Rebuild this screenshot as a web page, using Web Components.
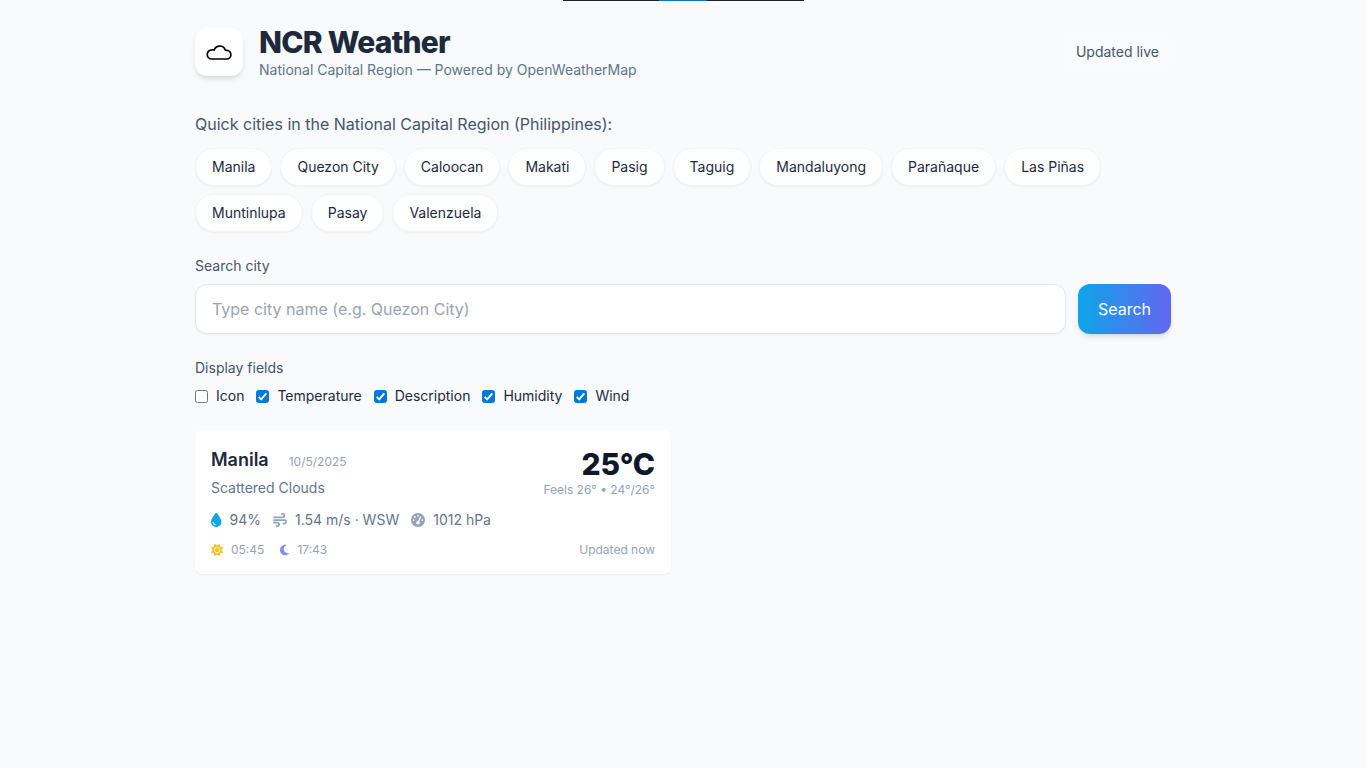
<!DOCTYPE html>
<html lang="en">
<head>
<meta charset="utf-8">
<title>NCR Weather</title>
<style>
body{margin:0;min-height:100vh;background:#f8fafc;color:#1e293b;font:16px/24px Inter,sans-serif}
</style>
</head>
<body>
<weather-app></weather-app>
<script>
const define = (name, html, setup) => {
  const tpl = document.createElement('template');
  tpl.innerHTML = '<style>*{box-sizing:border-box}:host{box-sizing:border-box}</style>' + html;
  customElements.define(name, class extends HTMLElement {
    constructor() {
      super();
      this.attachShadow({mode: 'open'}).append(tpl.content.cloneNode(true));
    }
    connectedCallback() { if (setup) setup(this, this.shadowRoot); }
  });
};

const icons = {
  droplet: ['0 0 384 512', 'M192 512C86 512 0 426 0 320C0 228.800 130.200 57.700 166.600 11.700C172.600 4.200 181.500 0 191.100 0h1.800c9.600 0 18.500 4.200 24.500 11.700C253.800 57.700 384 228.800 384 320c0 106-86 192-192 192zM96 336c0-8.800-7.200-16-16-16s-16 7.200-16 16c0 61.900 50.100 112 112 112c8.800 0 16-7.200 16-16s-7.200-16-16-16c-44.200 0-80-35.800-80-80z'],
  wind: ['0 0 512 512', 'M288 32c0 17.700 14.300 32 32 32h32c17.700 0 32 14.300 32 32s-14.300 32-32 32H32c-17.700 0-32 14.300-32 32s14.300 32 32 32H352c53 0 96-43 96-96s-43-96-96-96H320c-17.700 0-32 14.300-32 32zm64 352c0 17.700 14.300 32 32 32h32c53 0 96-43 96-96s-43-96-96-96H32c-17.700 0-32 14.300-32 32s14.300 32 32 32H416c17.700 0 32 14.300 32 32s-14.300 32-32 32H384c-17.700 0-32 14.300-32 32zM128 512h32c53 0 96-43 96-96s-43-96-96-96H32c-17.700 0-32 14.300-32 32s14.300 32 32 32H160c17.700 0 32 14.300 32 32s-14.300 32-32 32H128c-17.700 0-32 14.300-32 32s14.300 32 32 32z'],
  gauge: ['0 0 512 512', 'M0 256a256 256 0 1 1 512 0A256 256 0 1 1 0 256zM288 96a32 32 0 1 0-64 0 32 32 0 1 0 64 0zM256 416c35.300 0 64-28.700 64-64c0-17.400-6.900-33.100-18.100-44.600L366 161.700c5.300-12.100-.2-26.300-12.300-31.600s-26.300 .2-31.600 12.300L257.900 288c-.6 0-1.300 0-1.900 0c-35.300 0-64 28.700-64 64s28.700 64 64 64zM176 144a32 32 0 1 0-64 0 32 32 0 1 0 64 0zM96 288a32 32 0 1 0 0-64 32 32 0 1 0 0 64zm352-32a32 32 0 1 0-64 0 32 32 0 1 0 64 0z'],
  sun: ['0 0 512 512', 'M361.500 1.200c5 2.100 8.600 6.600 9.600 11.900L391 121l107.900 19.800c5.300 1 9.800 4.600 11.900 9.600s1.500 10.700-1.600 15.200L446.900 256l62.300 90.300c3.100 4.500 3.700 10.200 1.600 15.200s-6.600 8.600-11.900 9.600L391 391 371.100 498.900c-1 5.300-4.600 9.800-9.600 11.900s-10.700 1.500-15.200-1.600L256 446.900l-90.300 62.300c-4.500 3.100-10.200 3.700-15.200 1.600s-8.600-6.600-9.600-11.900L121 391 13.100 371.100c-5.300-1-9.800-4.600-11.900-9.600s-1.500-10.700 1.600-15.200L65.100 256 2.800 165.700c-3.100-4.500-3.700-10.200-1.600-15.200s6.600-8.600 11.900-9.600L121 121 140.900 13.100c1-5.300 4.600-9.800 9.600-11.900s10.700-1.500 15.200 1.600L256 65.100 346.300 2.800c4.500-3.100 10.200-3.700 15.200-1.600zM160 256a96 96 0 1 1 192 0 96 96 0 1 1-192 0zm224 0a128 128 0 1 0-256 0 128 128 0 1 0 256 0z'],
  moon: ['0 0 384 512', 'M223.500 32C100 32 0 132.300 0 256S100 480 223.500 480c60.600 0 115.500-24.200 155.800-63.400c5-4.900 6.300-12.500 3.100-18.700s-10.100-9.700-17-8.500c-9.800 1.700-19.800 2.600-30.100 2.600c-96.900 0-175.500-78.800-175.500-176c0-65.800 36-123.100 89.300-153.300c6.100-3.500 9.200-10.500 7.700-17.300s-7.300-11.900-14.300-12.500c-6.300-.5-12.600-.8-19-.8z']
};

define('weather-icon', `<style>
:host{display:block;height:1em;flex:none}
svg{display:block;height:1em;fill:currentColor}
</style><svg fill-rule="evenodd"><path/></svg>`, (el, root) => {
  const [box, d] = icons[el.getAttribute('name')];
  const [, , w, h] = box.split(' ');
  const svg = root.querySelector('svg');
  svg.setAttribute('viewBox', box);
  svg.style.width = w / h + 'em';
  svg.firstChild.setAttribute('d', d);
});

define('top-strip', `<style>
:host{position:absolute;top:0;left:563px;width:241px;height:1px;display:flex;padding-left:96px;background:#202020}
i{width:48px;background:#0078d7}
</style><i></i>`);

define('app-header', `<style>
:host{display:flex;align-items:center;justify-content:space-between}
.brand{display:flex;align-items:center;gap:16px}
.logo{width:48px;height:48px;border-radius:12px;background:#fff;display:grid;place-items:center;box-shadow:0 4px 6px -1px #0000001a,0 2px 4px -2px #0000001a}
h1{margin:0;font-size:30px;line-height:36px;font-weight:800;letter-spacing:-.025em}
p{margin:0;font-size:14px;line-height:20px;color:#64748b}
.live{font-size:14px;line-height:20px;color:#475569;background:#ffffff4d;border-radius:8px;padding:4px 12px}
</style>
<div class="brand"><div class="logo"><svg width="26" height="16" viewBox="0 0 26 16" fill="none" stroke="#000" stroke-width="1.7"><path d="M5.900 15A4.600 4.600 0 0 1 5.800 5.800Q7.200 5.600 8.100 6A5.900 5.900 0 0 1 19.100 5.600Q19.400 6.300 20.800 6.300A4.360 4.360 0 0 1 20.800 15Z"/></svg></div>
<div><h1>NCR Weather</h1><p>National Capital Region — Powered by OpenWeatherMap</p></div></div>
<div class="live">Updated live</div>`);

define('city-chip', `<style>
:host{display:block;padding:8px 16px;border:1px solid #f1f5f9;border-radius:99px;background:#fff;font-size:14px;line-height:20px;box-shadow:0 1px 2px #0000000d}
</style><slot></slot>`);

define('city-list', `<style>
:host{display:block;margin-top:32px}
p{margin:0 0 12px;color:#475569}
div{display:flex;flex-wrap:wrap;gap:8px}
</style><p>Quick cities in the National Capital Region (Philippines):</p><div><slot></slot></div>`);

define('city-search', `<style>
:host{display:block;margin-top:24px}
label{display:block;font-size:14px;line-height:20px;color:#475569;margin-bottom:8px}
.row{display:flex;gap:12px}
input{flex:1;min-width:0;height:50px;padding:12px 16px;border:1px solid #e2e8f0;border-radius:12px;background:#fff;font:inherit;color:inherit;box-shadow:0 1px 2px #0000000d}
input::placeholder{color:#9ca3af;opacity:1}
button{border:0;border-radius:12px;padding:12px 20px;font:400 16px/24px Inter,sans-serif;color:#fff;background:linear-gradient(to right,#0ea5e9,#6366f1);box-shadow:0 4px 6px -1px #0000001a,0 2px 4px -2px #0000001a}
</style><label for="q">Search city</label>
<div class="row"><input id="q" placeholder="Type city name (e.g. Quezon City)"><button>Search</button></div>`);

define('field-toggle', `<style>
:host{display:block}
label{display:flex;align-items:center;gap:8px}
input{appearance:none;margin:0;width:13px;height:13px;border:1px solid #767676;border-radius:2.500px;background:#fff}
input:checked{border-color:#0078d7;background:#0078d7}
span{display:grid;grid-template:13px/13px;align-items:center}
span>*{grid-area:1/1}
svg{position:relative;display:none}
input:checked+svg{display:block}
</style><label><span><input type="checkbox"><svg width="13" height="13" viewBox="0 0 13 13" fill="none" stroke="#fff" stroke-width="1.9"><path d="M2.700 6.800 5.200 9.300 10.300 3.300"/></svg></span><slot></slot></label>`, (el, root) => {
  root.querySelector('input').checked = el.hasAttribute('checked');
});

define('display-fields', `<style>
:host{display:block;margin-top:24px;font-size:14px;line-height:20px}
p{margin:0 0 8px;color:#475569}
div{display:flex;gap:11.970px}
</style><p>Display fields</p><div><slot></slot></div>`);

define('weather-card', `<style>
:host{display:block;padding:16px;border-radius:8px;background:#fff;box-shadow:0 1px 2px #0000000d}
.top,.foot{display:flex;justify-content:space-between}
.name{display:flex;align-items:baseline;gap:20px;font-size:18px;line-height:28px;font-weight:600}
small{font-size:12px;line-height:16px;font-weight:400;color:#94a3b8}
.desc{margin-top:4px;font-size:14px;line-height:20px;color:#64748b}
.temp{text-align:right}
.temp b{display:block;font-size:30px;line-height:36px;font-weight:800;letter-spacing:-.15px;color:#0f172a}
.temp small{display:block}
.stats{display:flex;gap:12px;margin-top:12px;font-size:14px;line-height:20px;color:#64748b}
.stats div,.times div{display:flex;align-items:center;gap:8px}
.foot{margin-top:12px;font-size:12px;line-height:16px;color:#94a3b8}
.times{display:flex;gap:16px}
</style>
<div class="top"><div><div class="name">Manila<small>10/5/2025</small></div><div class="desc">Scattered Clouds</div></div>
<div class="temp"><b>25°C</b><small>Feels 26° • 24°/26°</small></div></div>
<div class="stats">
<div><weather-icon name="droplet" style="color:#0ea5e9"></weather-icon>94%</div>
<div><weather-icon name="wind" style="color:#94a3b8"></weather-icon>1.54 m/s · WSW</div>
<div><weather-icon name="gauge" style="color:#94a3b8"></weather-icon>1012 hPa</div></div>
<div class="foot"><div class="times"><div><weather-icon name="sun" style="color:#fbbf24"></weather-icon>05:45</div>
<div><weather-icon name="moon" style="color:#818cf8"></weather-icon>17:43</div></div><span>Updated now</span></div>`);

const cities = ['Manila','Quezon City','Caloocan','Makati','Pasig','Taguig','Mandaluyong','Parañaque','Las Piñas','Muntinlupa','Pasay','Valenzuela'];
define('weather-app', `<style>
:host{display:block;max-width:1024px;margin:0 auto;padding:24px}
.grid{display:grid;grid-template-columns:1fr 1fr;gap:24px;margin-top:24px}
</style>
<top-strip></top-strip>
<app-header></app-header>
<city-list>${cities.map(c => `<city-chip>${c}</city-chip>`).join('')}</city-list>
<city-search></city-search>
<display-fields><field-toggle>Icon</field-toggle>${['Temperature','Description','Humidity','Wind'].map(f => `<field-toggle checked>${f}</field-toggle>`).join('')}</display-fields>
<div class="grid"><weather-card></weather-card></div>`);
</script>
</body>
</html>
